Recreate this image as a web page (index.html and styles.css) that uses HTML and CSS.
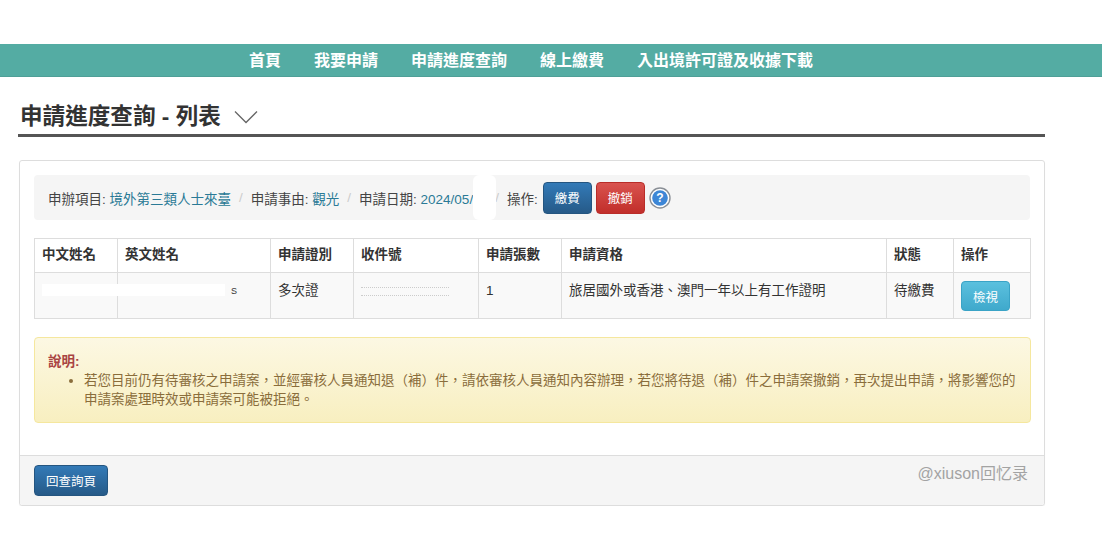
FILE: index.html
```html
<!DOCTYPE html>
<html lang="zh-Hant">
<head>
<meta charset="utf-8">
<title>申請進度查詢 - 列表</title>
<link rel="stylesheet" href="styles.css">
</head>
<body>
<nav class="nav">
  <a>首頁</a><a>我要申請</a><a>申請進度查詢</a><a>線上繳費</a><a>入出境許可證及收據下載</a>
</nav>
<main class="page">
  <h1 class="title">申請進度查詢 - 列表
    <svg class="chev" width="24" height="14" viewBox="0 0 24 14"><path d="M1 1.5 12 12.5 23 1.5" fill="none" stroke="#666" stroke-width="1.3"/></svg>
  </h1>
  <section class="panel">
    <div class="panel-body">
      <div class="crumb">
        <span>申辦項目: <b class="val">境外第三類人士來臺</b></span><i class="sep">/</i>
        <span>申請事由: <b class="val">觀光</b></span><i class="sep">/</i>
        <span>申請日期: <b class="val">2024/05/</b></span><i class="sep gapped">/</i>
        <span>操作:</span>
        <button class="btn blue act">繳費</button>
        <button class="btn red act">撤銷</button>
        <svg class="help" width="22" height="22" viewBox="0 0 22 22"><circle cx="11" cy="11" r="10" fill="#fff" stroke="#8a8f96" stroke-width="1.4"/><circle cx="11" cy="11" r="7.8" fill="#3d86d6"/><text x="11" y="15" text-anchor="middle" class="help-q">?</text></svg>
        <span class="mask mask-date"></span>
      </div>
      <div class="table-wrap">
        <table class="tbl">
          <colgroup><col class="c1"><col class="c2"><col class="c3"><col class="c4"><col class="c5"><col class="c6"><col class="c7"><col class="c8"></colgroup>
          <thead><tr><th>中文姓名</th><th>英文姓名</th><th>申請證別</th><th>收件號</th><th>申請張數</th><th>申請資格</th><th>狀態</th><th>操作</th></tr></thead>
          <tbody><tr><td></td><td class="tail">S</td><td>多次證</td><td><span class="dash"></span></td><td>1</td><td class="sc">旅居國外或香港、澳門一年以上有工作證明</td><td>待繳費</td><td><button class="btn cyan view">檢視</button></td></tr></tbody>
        </table>
        <span class="mask mask-name"></span>
      </div>
      <div class="alert">
        <strong class="alert-h">說明:</strong>
        <ul class="alert-list"><li>若您目前仍有待審核之申請案，並經審核人員通知退（補）件，請依審核人員通知內容辦理，若您將待退（補）件之申請案撤銷，再次提出申請，將影響您的申請案處理時效或申請案可能被拒絕。</li></ul>
      </div>
    </div>
    <footer class="panel-foot">
      <button class="btn blue back">回查詢頁</button>
      <span class="mark">@xiuson回忆录</span>
    </footer>
  </section>
</main>
</body>
</html>
```

FILE: styles.css
```css
* { box-sizing: border-box; }
html, body { margin: 0; padding: 0; background: #fff; }
body {
  font-family: "Liberation Sans", "Noto Sans CJK TC", sans-serif;
  color: #333;
  font-size: 13.5px;
  padding-top: 44px;
  overflow: hidden;
}
.nav {
  height: 33px;
  background: #54aca3;
  display: flex;
  align-items: center;
  gap: 33px;
  padding-left: 249px;
  padding-bottom: 3px;
  border-bottom: 1px solid #4f9f97;
}
.nav a { color: #fff; font-size: 16px; font-weight: 700; }
.page { width: 1027px; margin-left: 18px; }
.title {
  margin: 26px 0 0;
  height: 34px;
  border-bottom: 3px solid #555;
  font-size: 22.6px;
  line-height: 28px;
  font-weight: 700;
  color: #333;
  padding-left: 2px;
  display: flex;
  align-items: flex-start;
  white-space: pre;
}
.chev { margin: 7px 0 0 13px; }
.panel {
  margin: 23px 0 0 1px;
  height: 346px;
  border: 1px solid #ddd;
  border-radius: 3px;
  box-shadow: 0 1px 1px rgba(0,0,0,.05);
  display: flex;
  flex-direction: column;
}
.panel-body { flex: 1; padding: 14px 14px 0; }
.crumb {
  position: relative;
  height: 45px;
  background: #f5f5f5;
  border-radius: 4px;
  padding-left: 14px;
  display: flex;
  align-items: center;
  color: #444;
  white-space: nowrap;
}
.val { font-weight: 400; color: #2a7a96; }
.sep { font-style: normal; color: #ccc; margin: 0 8px; }
.gapped { margin: 0 8px 0 22px; }
.btn {
  font-family: inherit;
  border-radius: 4px;
  color: #fff;
  padding: 0;
  cursor: pointer;
  font-size: 12.5px;
}
.blue { background: linear-gradient(#337ab7, #265a88); border: 1px solid #245580; }
.red { background: linear-gradient(#d9534f, #c12e2a); border: 1px solid #b92c28; }
.cyan { background: linear-gradient(#5bc0de, #3fa9cc); border: 1px solid #3aa3c6; }
.act { height: 32px; margin-left: 4px; width: 49px; }
.act.blue { margin-left: 5px; }
.help { margin-left: 4px; }
.help-q { font: 700 12px "Liberation Sans", sans-serif; fill: #fff; }
.mask { position: absolute; background: #fff; }
.mask-date { left: 439px; top: 0; width: 23px; height: 45px; border-radius: 6px; }
.table-wrap { position: relative; margin-top: 18px; }
.tbl { width: 100%; border-collapse: collapse; table-layout: fixed; border: 1px solid #ddd; }
.c1, .c3, .c5 { width: 83px; }
.c2 { width: 153px; }
.c4 { width: 125px; }
.c6 { width: 325px; }
.c7 { width: 67px; }
.c8 { width: 77px; }
.tbl th, .tbl td { border: 1px solid #ddd; padding: 0 7px; text-align: left; vertical-align: top; }
.tbl th { height: 34px; font-weight: 700; line-height: 31px; color: #333; }
.tbl td { height: 46px; background: #f9f9f9; line-height: 18px; padding-top: 9px; color: #333; }
.sc { font-family: "Liberation Sans", "Noto Sans CJK SC", sans-serif; }
.tail { text-align: right !important; padding-right: 33px !important; font-size: 9px; }
.dash { display: block; width: 88px; height: 9px; margin-top: 5px; border-top: 1px dotted #ccc; border-bottom: 1px dotted #ccc; }
.tbl .view { width: 49px; height: 30px; display: block; margin-top: -1px; }
.mask-name { left: 8px; top: 46px; width: 183px; height: 12px; }
.alert {
  margin: 18px -1px 0 0;
  height: 86px;
  border: 1px solid #f5e79e;
  border-radius: 4px;
  background: linear-gradient(#fcf8e3, #f8efc0);
  color: #8a6d3b;
  padding: 14px 13px 0;
  line-height: 19px;
  font-family: "Liberation Sans", "Noto Sans CJK SC", sans-serif;
}
.alert-h { display: block; color: #a94442; font-family: "Liberation Sans", "Noto Sans CJK TC", sans-serif; }
.alert-list { margin: 0; padding-left: 36px; }
.panel-foot {
  height: 50px;
  background: #f5f5f5;
  border-top: 1px solid #ddd;
  padding: 9px 14px 0;
  display: flex;
  justify-content: space-between;
  align-items: flex-start;
  border-radius: 0 0 3px 3px;
}
.back { width: 74px; height: 31px; }
.mark { font-size: 16px; color: #a3a3a3; margin: 0 2px 0 0; line-height: 18px; }
```
